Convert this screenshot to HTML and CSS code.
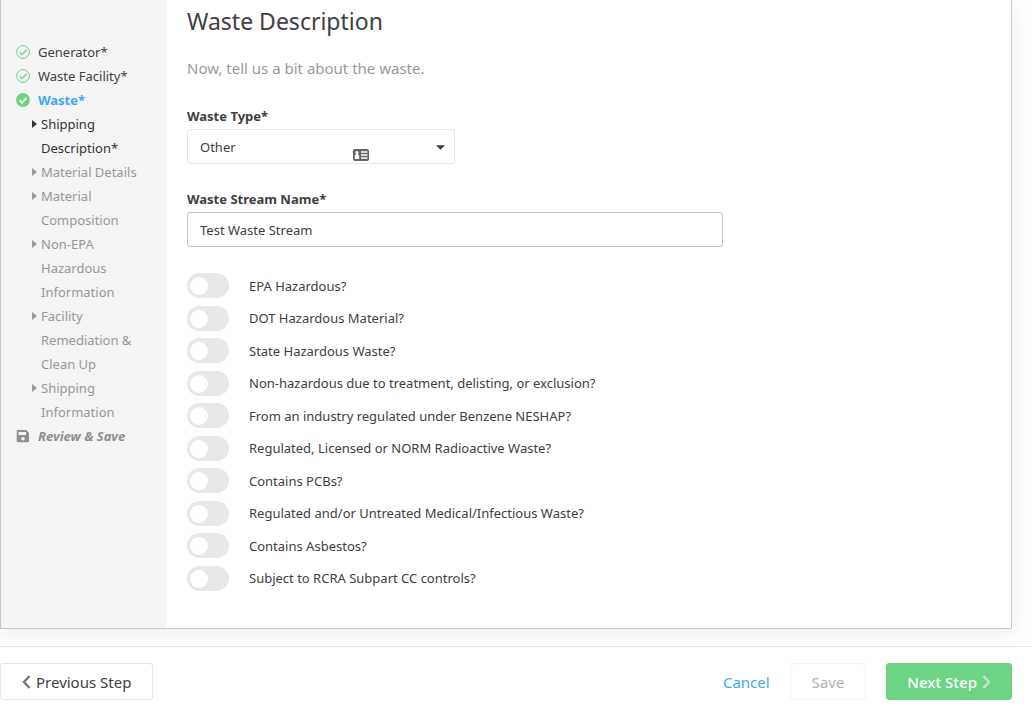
FILE: index.html
```html
<!DOCTYPE html>
<html lang="en">

<head>
  <meta charset="UTF-8">
  <meta name="viewport" content="width=device-width, initial-scale=1">
  <title>Waste Description</title>
  <link rel="stylesheet" href="styles.css">
</head>

<body>

<div class="wizard">
  <!-- Steps -->
  <nav class="sidebar">
    <ul class="steps">
      <li>
        <a href="#generator">
          <svg class="step-icon" viewBox="0 0 14 14"><circle cx="7" cy="7" r="6.4" fill="none" stroke="#6cd483" stroke-width="1"/><path d="M3.500 7.200l2.400 2.400L10.600 4.800" fill="none" stroke="#6cd483" stroke-width="1.300"/></svg>
          Generator*
        </a>
      </li>
      <li>
        <a href="#facility">
          <svg class="step-icon" viewBox="0 0 14 14"><circle cx="7" cy="7" r="6.4" fill="none" stroke="#6cd483" stroke-width="1"/><path d="M3.500 7.200l2.400 2.400L10.600 4.800" fill="none" stroke="#6cd483" stroke-width="1.300"/></svg>
          Waste Facility*
        </a>
      </li>
      <li>
        <a class="active" href="#waste">
          <svg class="step-icon" viewBox="0 0 14 14"><circle cx="7" cy="7" r="6.9" fill="#6cd483"/><path d="M3.600 7.200l2.400 2.400L10.500 5" fill="none" stroke="#fff" stroke-width="1.900"/></svg>
          Waste*
        </a>
        <ul class="substeps">
          <li><a class="current" href="#shipping-description">Shipping Description*</a></li>
          <li><a href="#material-details">Material Details</a></li>
          <li><a href="#material-composition">Material Composition</a></li>
          <li><a href="#non-epa">Non-EPA Hazardous Information</a></li>
          <li><a href="#remediation">Facility Remediation &amp; Clean Up</a></li>
          <li><a href="#shipping-information">Shipping Information</a></li>
        </ul>
      </li>
      <li>
        <a class="review" href="#review">
          <svg class="step-icon" viewBox="0 0 14 14"><path fill="#8f8f8f" fill-rule="evenodd" d="M2 1h8.200L13 3.800V12a1.300 1.300 0 0 1-1.300 1.300H2A1.300 1.300 0 0 1 .7 12V2.300A1.300 1.300 0 0 1 2 1zM2.500 3v3h7.500V3zM7 8a1.800 1.800 0 1 0 0 3.600A1.800 1.800 0 0 0 7 8z"/></svg>
          Review &amp; Save
        </a>
      </li>
    </ul>
  </nav>

  <!-- Form -->
  <main class="content">
    <h1>Waste Description</h1>
    <p class="intro">Now, tell us a bit about the waste.</p>

    <form id="waste-form">
      <div class="field">
        <label for="waste-type">Waste Type*</label>
        <div class="select-wrap">
          <select id="waste-type">
            <option selected>Other</option>
          </select>
          <svg class="card-icon" viewBox="0 0 16 12"><rect width="16" height="12" rx="2" fill="#666"/><path fill="#fff" d="M4 2a1.500 1.500 0 0 1 1.300 2.200L5 5.500l1.200 1V10H1.800V6.500L3 5.500l-.3-1.300A1.500 1.500 0 0 1 4 2zM8 2.300h6.500v1.400H8zM8 5.300h6.500v1.400H8zM8 8.300h6.500v1.400H8z"/></svg>
          <svg class="caret" viewBox="0 0 10 5"><path fill="#404040" d="M0 0h10L5 5z"/></svg>
        </div>
      </div>

      <div class="field">
        <label for="stream-name">Waste Stream Name*</label>
        <input type="text" id="stream-name" value="Test Waste Stream">
      </div>

      <div class="toggles">
        <label><input type="checkbox">EPA Hazardous?</label>
        <label><input type="checkbox">DOT Hazardous Material?</label>
        <label><input type="checkbox">State Hazardous Waste?</label>
        <label><input type="checkbox">Non-hazardous due to treatment, delisting, or exclusion?</label>
        <label><input type="checkbox">From an industry regulated under Benzene NESHAP?</label>
        <label><input type="checkbox">Regulated, Licensed or NORM Radioactive Waste?</label>
        <label><input type="checkbox">Contains PCBs?</label>
        <label><input type="checkbox">Regulated and/or Untreated Medical/Infectious Waste?</label>
        <label><input type="checkbox">Contains Asbestos?</label>
        <label><input type="checkbox">Subject to RCRA Subpart CC controls?</label>
      </div>
    </form>
  </main>
</div>

<footer class="actions">
  <button type="button" class="btn">
    <svg class="chevron" viewBox="0 0 9 14"><path d="M7.500 1L2 7l5.500 6" fill="none" stroke="#777" stroke-width="2.400"/></svg>
    Previous Step
  </button>
  <div class="actions-right">
    <a class="cancel" href="#cancel">Cancel</a>
    <button type="button" class="btn" disabled>Save</button>
    <button type="submit" form="waste-form" class="btn btn-next">
      Next Step
      <svg class="chevron" viewBox="0 0 9 14"><path d="M1.500 1L7 7l-5.500 6" fill="none" stroke="#c0eccb" stroke-width="2.400"/></svg>
    </button>
  </div>
</footer>

</body>
</html>
```

FILE: styles.css
```css
* {
  box-sizing: border-box;
}

body {
  margin: 0;
  font-family: "Noto Sans", sans-serif;
  font-size: 13px;
  line-height: 24px;
  color: #404040;
  background-color: #fff;
}

a {
  color: inherit;
  text-decoration: none;
}

ul {
  list-style: none;
  margin: 0;
  padding: 0;
}

.wizard {
  display: flex;
  margin-right: 20px;
  background-color: #fff;
  border: 1px solid #c8c8c8;
  border-top: 0;
  box-shadow: 0 4px 20px rgba(0, 0, 0, 0.08);
}

/* Sidebar */
.sidebar {
  flex: 0 0 166px;
  padding: 40px 15px;
  background-color: #f4f4f4;
}

.steps > li > a {
  display: flex;
  align-items: center;
  gap: 8px;
}

.steps .active {
  color: #3fa9f5;
  font-weight: bold;
}

.steps .review {
  color: #8f8f8f;
  font-weight: bold;
  font-style: italic;
}

.step-icon {
  width: 14px;
  height: 14px;
}

.substeps {
  padding-left: 16px;
  color: #999;
}

.substeps a {
  display: flex;
  gap: 4px;
}

.substeps a::before {
  content: "";
  flex: none;
  align-self: flex-start;
  margin-top: 8px;
  border: 4px solid transparent;
  border-left: 5px solid;
  border-right: 0;
}

.substeps .current {
  color: #333;
}

/* Content */
.content {
  flex: 1;
  padding: 6px 20px 37px;
}

h1 {
  margin: 0 0 20px;
  font-size: 23px;
  font-weight: normal;
  line-height: 30px;
}

.intro {
  margin: 0 0 24px;
  font-size: 15px;
  color: #999;
}

.field {
  margin-bottom: 23px;
}

.field label {
  display: block;
  margin-bottom: 1px;
  font-weight: bold;
}

.select-wrap {
  position: relative;
  width: 268px;
}

select,
input[type="text"] {
  display: block;
  width: 100%;
  height: 35px;
  padding: 0 12px;
  border: 1px solid #e6e6e6;
  border-radius: 3px;
  background-color: #fff;
  color: inherit;
  font: inherit;
  appearance: none;
}

input[type="text"] {
  max-width: 536px;
  border-color: #c4c4c4;
}

.card-icon {
  position: absolute;
  right: 86px;
  bottom: 3px;
  width: 16px;
  height: 12px;
  pointer-events: none;
}

.caret {
  position: absolute;
  right: 10px;
  top: 16px;
  width: 9px;
  height: 5px;
  pointer-events: none;
}

/* Toggles */
.toggles {
  display: flex;
  flex-direction: column;
  justify-content: space-between;
  min-height: 318px;
  margin-top: 26px;
}

.toggles label {
  display: flex;
  align-items: center;
  gap: 20px;
}

.toggles input {
  appearance: none;
  flex: none;
  width: 42px;
  height: 25px;
  margin: 0;
  padding: 4px 3px;
  border-radius: 13px;
  background-color: #e8e8e8;
}

.toggles input::before {
  content: "";
  display: block;
  width: 18px;
  height: 18px;
  border-radius: 50%;
  background-color: #fff;
}

.toggles input:checked {
  background-color: #6cd483;
}

.toggles input:checked::before {
  margin-left: 18px;
}

/* Bottom bar */
.actions {
  position: relative;
  display: flex;
  justify-content: space-between;
  margin-top: 17px;
  padding: 16px 20px 12px 0;
  border-top: 1px solid #e6e6e6;
  background-color: #fff;
}

.actions-right {
  display: flex;
  align-items: center;
  gap: 20px;
}

.btn {
  display: flex;
  align-items: center;
  gap: 5px;
  height: 37px;
  padding: 0 21px;
  border: 1px solid #e6e6e6;
  border-radius: 3px;
  background-color: #fff;
  color: #404040;
  font: inherit;
  font-size: 15px;
  cursor: pointer;
}

.btn:disabled {
  border-color: #f4f4f4;
  color: #b0b0b0;
  cursor: default;
}

.btn-next {
  padding: 0 20px;
  border-color: #6cd483;
  background-color: #6cd483;
  color: #fff;
  font-weight: 500;
}

.chevron {
  width: 9px;
  height: 14px;
}

.cancel {
  color: #3fa9f5;
  font-size: 15px;
}
```
